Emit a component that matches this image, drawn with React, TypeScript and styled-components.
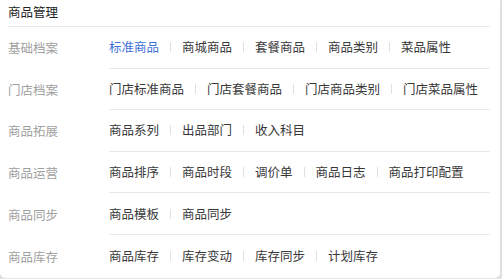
import React from 'react';
import styled, { createGlobalStyle } from 'styled-components';

const GlobalStyle = createGlobalStyle`
  html, body {
    margin: 0;
    padding: 0;
    background: #e6e6e6;
    font-family: "Noto Sans CJK SC", "Noto Sans", sans-serif;
  }
`;

interface Group {
  label: string;
  items: string[];
}

const GROUPS: Group[] = [
  { label: '基础档案', items: ['标准商品', '商城商品', '套餐商品', '商品类别', '菜品属性'] },
  { label: '门店档案', items: ['门店标准商品', '门店套餐商品', '门店商品类别', '门店菜品属性'] },
  { label: '商品拓展', items: ['商品系列', '出品部门', '收入科目'] },
  { label: '商品运营', items: ['商品排序', '商品时段', '调价单', '商品日志', '商品打印配置'] },
  { label: '商品同步', items: ['商品模板', '商品同步'] },
  { label: '商品库存', items: ['商品库存', '库存变动', '库存同步', '计划库存'] },
];

const App = () => (
  <>
    <GlobalStyle />
    <Card>
      <Title>商品管理</Title>
      {GROUPS.map((g, gi) => (
        <Row key={g.label}>
          <Label>{g.label}</Label>
          <Items $last={gi === GROUPS.length - 1}>
            {g.items.map((it, i) => (
              <React.Fragment key={it}>
                {i > 0 && <Sep />}
                <Item $active={gi === 0 && i === 0}>{it}</Item>
              </React.Fragment>
            ))}
          </Items>
        </Row>
      ))}
    </Card>
  </>
);

export default App;

const Card = styled.div`
  width: 500px;
  box-sizing: border-box;
  padding: 0 10px 0 8px;
  background: #fff;
  border-radius: 0 0 5px 5px;
  box-shadow: 0 1px 3px rgba(0, 0, 0, 0.12);
`;

const Title = styled.div`
  height: 27px;
  box-sizing: border-box;
  padding-top: 3px;
  font-size: 12.5px;
  line-height: 18px;
  color: #222;
  border-bottom: 1px solid #e8e8e8;
`;

const Row = styled.div`
  display: grid;
  grid-template-columns: 101px 1fr;
  align-items: stretch;
`;

const Label = styled.div`
  display: flex;
  align-items: center;
  font-size: 12.5px;
  color: #a0a0a0;
  white-space: nowrap;
`;

const Items = styled.div<{ $last?: boolean }>`
  display: flex;
  align-items: center;
  gap: 11px;
  height: ${({ $last }) => ($last ? '43px' : '40.6px')};
  border-bottom: ${({ $last }) => ($last ? 'none' : '1px solid #e8e8e8')};
`;

const Item = styled.span<{ $active?: boolean }>`
  font-size: 12.5px;
  line-height: 18px;
  white-space: nowrap;
  color: ${({ $active }) => ($active ? '#3f6fd8' : '#383838')};
  cursor: pointer;
`;

const Sep = styled.span`
  width: 1px;
  height: 10px;
  background: #e0e0e0;
`;
